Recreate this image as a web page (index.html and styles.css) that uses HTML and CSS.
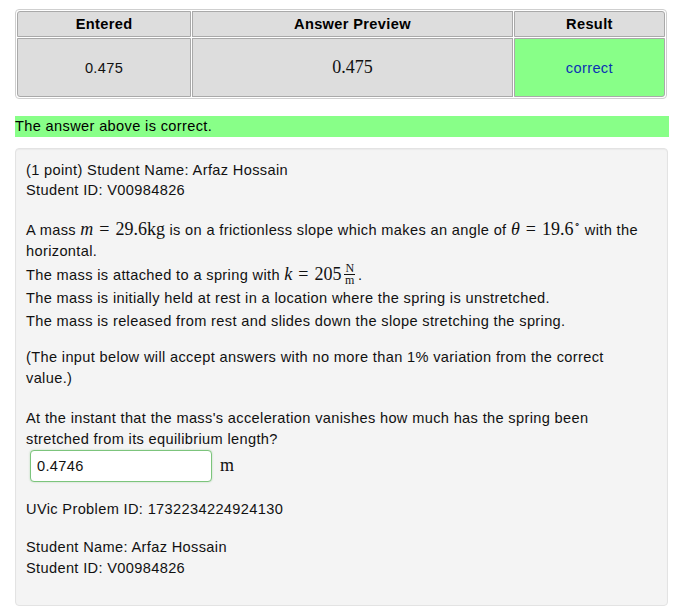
FILE: index.html
```html
<!DOCTYPE html>
<html>
<head>
<meta charset="utf-8">
<link rel="stylesheet" href="styles.css">
</head>
<body>
<div class="page">
  <table class="attempt">
    <tr>
      <th class="c1">Entered</th>
      <th class="c2">Answer Preview</th>
      <th class="c3">Result</th>
    </tr>
    <tr>
      <td class="c1">0.475</td>
      <td class="c2 mathv">0.475</td>
      <td class="c3 ok">correct</td>
    </tr>
  </table>

  <div class="msg">The answer above is correct.</div>

  <div class="well">
    <p class="p1">(1 point) Student Name: Arfaz Hossain<br>Student ID: V00984826</p>
    <div class="mass">
      <div class="ln ln1">A mass <span class="m"><i>m</i><span class="eq">=</span>29.6kg</span> is on a frictionless slope which makes an angle of <span class="m"><i>θ</i><span class="eq">=</span>19.6<sup class="deg">∘</sup></span> with the horizontal.</div>
      <div class="ln ln2">The mass is attached to a spring with <span class="m"><i>k</i><span class="eq">=</span>205<span class="frac"><span class="num">N</span><span class="den">m</span></span></span>.</div>
      <div class="ln ln3">The mass is initially held at rest in a location where the spring is unstretched.</div>
      <div class="ln ln3">The mass is released from rest and slides down the slope stretching the spring.</div>
    </div>
    <p class="note">(The input below will accept answers with no more than 1% variation from the correct value.)</p>
    <p class="q">At the instant that the mass's acceleration vanishes how much has the spring been stretched from its equilibrium length?</p>
    <div class="answer">
      <input class="inp" type="text" value="0.4746">
      <span class="unit">m</span>
    </div>
    <p class="pid">UVic Problem ID: 1732234224924130</p>
    <p class="last">Student Name: Arfaz Hossain<br>Student ID: V00984826</p>
  </div>
</div>
</body>
</html>
```

FILE: styles.css
```css
html, body {
  margin: 0;
  padding: 0;
  background: #fff;
}
body {
  font-family: "Liberation Sans", Arial, Helvetica, sans-serif;
  font-size: 14.6px;
  letter-spacing: 0.35px;
  color: #111;
}
.page {
  padding: 9px 18px 0 15px;
}
.attempt {
  border-collapse: separate;
  border-spacing: 1px;
  border: 1px solid #cfcfcf;
  border-radius: 4px;
  width: 652px;
  margin: 0;
}
.attempt th, .attempt td {
  background: #ddd;
  border: 1px solid #a9a9a9;
  text-align: center;
  padding: 0 5px;
}
.attempt th {
  height: 24px;
  font-weight: bold;
  color: #000;
}
.attempt td {
  height: 57px;
  color: #111;
}
.attempt th.c1 { border-top-left-radius: 3px; }
.attempt th.c3 { border-top-right-radius: 3px; }
.attempt td.c1 { border-bottom-left-radius: 3px; }
.attempt td.c3 { border-bottom-right-radius: 3px; }
.c1 { width: 163px; }
.c2 { width: 311px; }
.c3 { width: 140px; }
.mathv {
  font-family: "Liberation Serif", "Times New Roman", serif;
  font-size: 18px;
  letter-spacing: 0;
}
.attempt td.ok {
  background: #8f8;
  color: #0a32b4;
}
.msg {
  margin-top: 17px;
  background: #8f8;
  height: 21px;
  line-height: 21px;
  margin-right: -1px;
  color: #000;
}
.well {
  margin-top: 11px;
  background: #f4f4f4;
  border: 1px solid #e3e3e3;
  border-radius: 4px;
  box-shadow: inset 0 1px 1px rgba(0,0,0,0.04);
  padding: 11px 15px 26px 10px;
  color: #111;
}
.well p { margin: 0; }
.p1 { line-height: 20px; }
.mass { margin-top: 19px; }
.ln1 { line-height: 21px; }
.ln2 { line-height: 24px; }
.ln3 { line-height: 23px; }
.m {
  font-family: "Liberation Serif", "Times New Roman", serif;
  font-size: 18px;
  letter-spacing: 0;
  white-space: nowrap;
}
.m i { font-style: italic; }
.eq { margin: 0 6px; }
.deg {
  font-size: 10px;
  vertical-align: 8px;
  line-height: 0;
  margin-left: 1px;
}
.frac {
  display: inline-flex;
  flex-direction: column;
  align-items: center;
  vertical-align: 8px;
  margin-left: 3px;
  margin-right: 3px;
  line-height: 10px;
  font-size: 12px;
}
.frac .num {
  border-bottom: 1px solid #111;
  padding: 0 1px 1px;
}
.frac .den { padding-top: 0; }
.note {
  line-height: 21px;
  margin-top: 14px !important;
}
.q {
  line-height: 21px;
  margin-top: 19px !important;
}
.answer {
  display: flex;
  align-items: center;
  margin: 0 0 0 4px;
}
.inp {
  box-sizing: border-box;
  width: 182px;
  height: 32px;
  border: 1px solid #7cc47c;
  border-radius: 4px;
  box-shadow: 0 0 2px rgba(80,170,80,0.4);
  background: #fff;
  font-family: "Liberation Sans", Arial, sans-serif;
  font-size: 14.6px;
  letter-spacing: 0.35px;
  color: #111;
  padding: 0 6px;
  margin: 0;
  outline: none;
}
.unit {
  font-family: "Liberation Serif", "Times New Roman", serif;
  font-size: 18px;
  letter-spacing: 0;
  margin-left: 8px;
  margin-top: -2px;
}
.pid {
  line-height: 21px;
  margin-top: 17px !important;
}
.last {
  line-height: 21px;
  margin-top: 17px !important;
}
```
